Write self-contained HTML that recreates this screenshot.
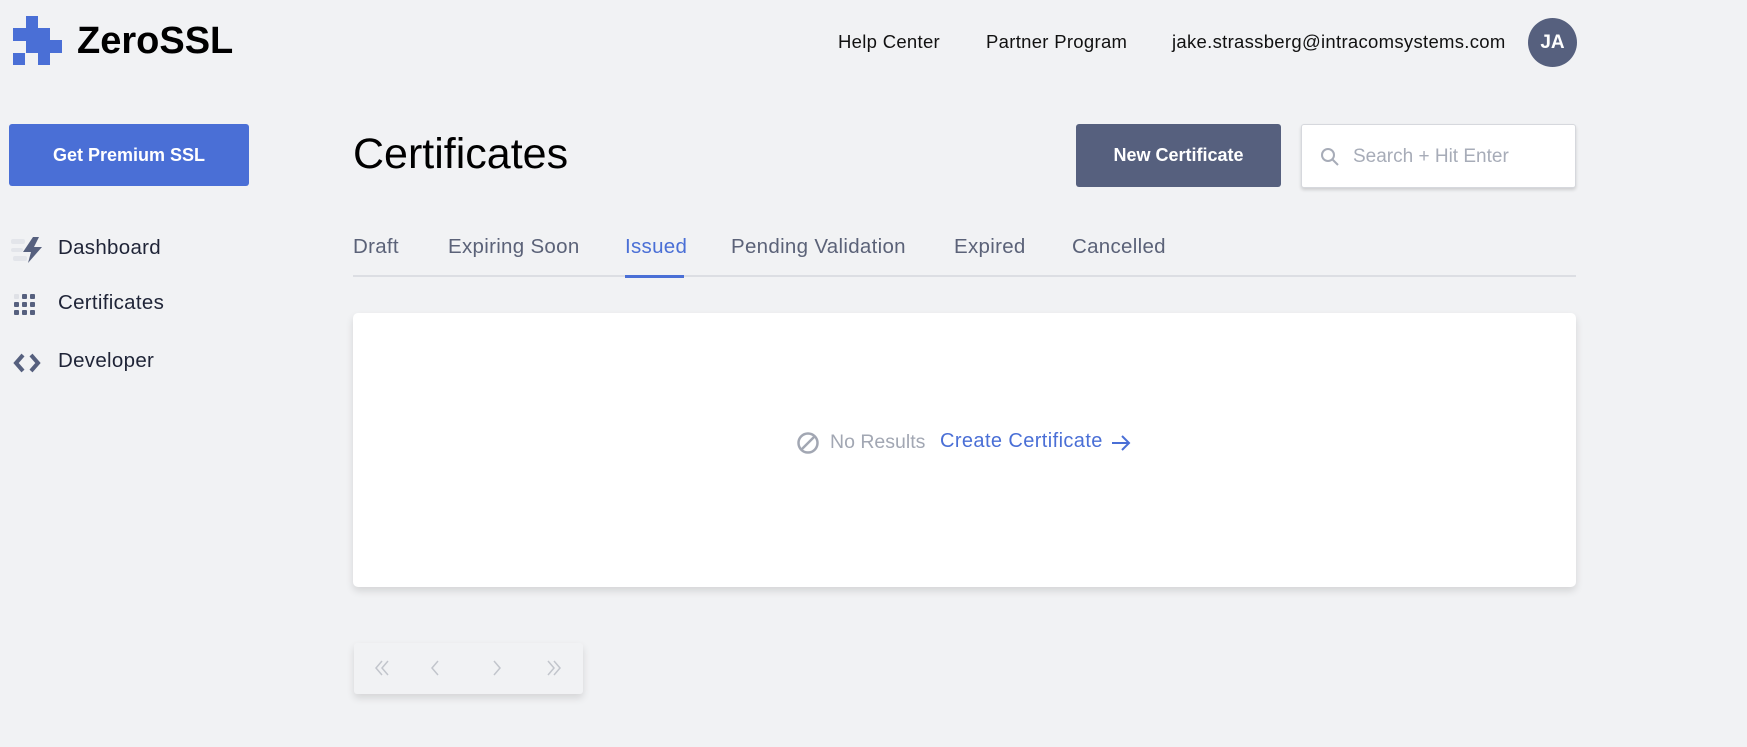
<!DOCTYPE html>
<html><head><style>
*{margin:0;padding:0;box-sizing:border-box}
body{width:1747px;height:747px;background:#f1f2f4;font-family:"Liberation Sans",sans-serif;position:relative;overflow:hidden;color:#1e2235}
.a{position:absolute;white-space:nowrap}
.nav{font-size:18.5px;color:#111;top:31px;letter-spacing:0.3px}
.side{font-size:20.5px;color:#1f2437;left:58px;letter-spacing:0.3px}
.tab{font-size:20.5px;color:#5b6278;top:235px;letter-spacing:0.3px}
</style></head><body>
<svg class="a" style="left:13px;top:16px" width="50" height="50" viewBox="13 16 50 50">
<g fill="#4a6fd6"><rect x="26" y="16" width="12" height="13"/><rect x="13" y="28" width="37" height="13"/><rect x="26" y="40" width="36" height="13"/><rect x="13" y="53" width="12" height="12"/><rect x="38" y="52" width="12" height="13"/></g></svg>
<div class="a" style="left:77px;top:20px;font-size:38px;font-weight:bold;color:#000;letter-spacing:0px">ZeroSSL</div>
<div class="a nav" style="left:838px">Help Center</div>
<div class="a nav" style="left:986px">Partner Program</div>
<div class="a nav" style="left:1172px">jake.strassberg@intracomsystems.com</div>
<div class="a" style="left:1528px;top:18px;width:49px;height:49px;border-radius:50%;background:#56607e;color:#fff;font-size:19px;font-weight:bold;text-align:center;line-height:49px">JA</div>
<div class="a" style="left:9px;top:124px;width:240px;height:62px;background:#4a6fd6;border-radius:3px;color:#fff;font-weight:bold;font-size:18px;text-align:center;line-height:62px">Get Premium SSL</div>
<svg class="a" style="left:11px;top:237px" width="34" height="26" viewBox="0 0 34 26"><g fill="#e3e5ea"><rect x="0" y="2" width="14" height="5" rx="2"/><rect x="0" y="11" width="12" height="4" rx="2"/><rect x="2" y="19" width="14" height="5" rx="2"/></g><path d="M22 0 L12 15 H20 L17 26 L31 10 H23 L28 0Z" fill="#56607e"/></svg>
<div class="a side" style="top:236px">Dashboard</div>
<svg class="a" style="left:14px;top:294px" width="24" height="24"><g fill="#56607e"><rect x="0" y="0" width="5" height="5" rx="1" fill="#dfe1e6"/><rect x="8" y="0" width="5" height="5" rx="1"/><rect x="16" y="0" width="5" height="5" rx="1"/><rect x="0" y="8" width="5" height="5" rx="1"/><rect x="8" y="8" width="5" height="5" rx="1"/><rect x="16" y="8" width="5" height="5" rx="1"/><rect x="0" y="16" width="5" height="5" rx="1"/><rect x="8" y="16" width="5" height="5" rx="1"/><rect x="16" y="16" width="5" height="5" rx="1"/></g></svg>
<div class="a side" style="top:291px">Certificates</div>
<svg class="a" style="left:13px;top:352px" width="28" height="22"><path d="M10 3 L3 11 L10 19 M18 3 L25 11 L18 19" stroke="#56607e" stroke-width="4" fill="none"/></svg>
<div class="a side" style="top:349px">Developer</div>
<div class="a" style="left:353px;top:130px;font-size:43px;color:#000">Certificates</div>
<div class="a" style="left:1076px;top:124px;width:205px;height:63px;background:#56607e;border-radius:3px;color:#fff;font-weight:bold;font-size:18px;text-align:center;line-height:63px">New Certificate</div>
<div class="a" style="left:1301px;top:124px;width:275px;height:64px;background:#fff;border:1px solid #d6d8dd;border-radius:3px;box-shadow:0 2px 3px rgba(0,0,0,.15)">
<svg class="a" style="left:18px;top:22px" width="20" height="20"><circle cx="8" cy="8" r="6" stroke="#a7acb8" stroke-width="2" fill="none"/><path d="M12.5 12.5 L18 18" stroke="#a7acb8" stroke-width="2"/></svg>
<div class="a" style="left:51px;top:21px;font-size:19px;color:#a7acb8">Search + Hit Enter</div></div>
<div class="a tab" style="left:353px">Draft</div>
<div class="a tab" style="left:448px">Expiring Soon</div>
<div class="a tab" style="left:625px;color:#4a6fd6">Issued</div>
<div class="a tab" style="left:731px">Pending Validation</div>
<div class="a tab" style="left:954px">Expired</div>
<div class="a tab" style="left:1072px">Cancelled</div>
<div class="a" style="left:353px;top:275px;width:1223px;height:2px;background:#dcdee3"></div>
<div class="a" style="left:625px;top:275px;width:59px;height:3px;background:#4a6fd6"></div>
<div class="a" style="left:353px;top:313px;width:1223px;height:274px;background:#fff;border-radius:5px;box-shadow:0 4px 8px rgba(0,0,0,.12)"></div>
<svg class="a" style="left:796px;top:431px" width="24" height="24"><circle cx="12" cy="12" r="9.5" stroke="#a2a7b3" stroke-width="2.5" fill="none"/><path d="M6 18 L18 6" stroke="#a2a7b3" stroke-width="2.5"/></svg>
<div class="a" style="left:830px;top:431px;font-size:19.5px;color:#a2a7b3">No Results</div>
<div class="a" style="left:940px;top:430px;font-size:20px;color:#4a6fd6;letter-spacing:0.4px">Create Certificate</div>
<svg class="a" style="left:1110px;top:434px" width="22" height="18"><path d="M2 9 H19 M12 2 L19 9 L12 16" stroke="#4a6fd6" stroke-width="2" fill="none"/></svg>
<div class="a" style="left:354px;top:643px;width:229px;height:51px;background:#f1f2f4;border-radius:3px;box-shadow:0 4px 8px rgba(0,0,0,.12)">
<svg class="a" style="left:0;top:0" width="229" height="51"><g stroke="#c2c5cc" stroke-width="1.5" fill="none"><path d="M28 18 L22 25 L28 32 M34 18 L28 25 L34 32 M84 18 L78 25 L84 32 M140 18 L146 25 L140 32 M194 18 L200 25 L194 32 M200 18 L206 25 L200 32"/></g></svg></div>
</body></html>
